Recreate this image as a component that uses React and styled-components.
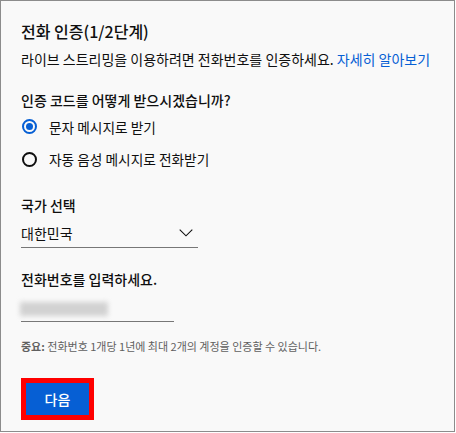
import React from "react";
import styled, { createGlobalStyle } from "styled-components";

const Global = createGlobalStyle`
  html, body { margin: 0; padding: 0; background: #ffffff; }
  * { box-sizing: border-box; }
`;

const Frame = styled.div`
  width: 455px;
  height: 432px;
  border: 1px solid #8c8c8c;
  border-right-width: 1.5px;
  border-bottom-width: 1.5px;
  background: #f9f9f9;
  padding: 20px 20px 0 20px;
  display: flex;
  flex-direction: column;
  align-items: flex-start;
  font-family: "Noto Sans CJK KR", "Noto Sans", sans-serif;
  color: #0f0f0f;
`;

const Title = styled.h1`
  margin: 0;
  font-size: 16px;
  line-height: 20px;
  font-weight: 500;
`;

const Text = styled.p`
  margin: ${(p) => p.$mt || 0}px 0 0 0;
  font-size: 14px;
  line-height: 20px;
  font-weight: ${(p) => (p.$strong ? 500 : 400)};
  white-space: nowrap;
`;

const Link = styled.a`
  color: #065fd4;
  text-decoration: none;
`;

const RadioGroup = styled.div`
  display: flex;
  flex-direction: column;
  margin-top: 0.5px;
`;

const RadioRow = styled.label`
  display: flex;
  align-items: center;
  height: 32.5px;
  gap: 12px;
  font-size: 13.7px;
  cursor: pointer;
`;

const RadioCircle = styled.span`
  width: 15px;
  height: 15px;
  margin-left: 1px;
  border-radius: 50%;
  border: 2px solid ${(p) => (p.$checked ? "#065fd4" : "#0f0f0f")};
  display: flex;
  align-items: center;
  justify-content: center;
  &::after {
    content: "";
    width: 7px;
    height: 7px;
    border-radius: 50%;
    background: ${(p) => (p.$checked ? "#065fd4" : "transparent")};
  }
`;

const Select = styled.div`
  margin-top: 8px;
  width: 177px;
  display: flex;
  align-items: center;
  justify-content: space-between;
  padding: 0 5px 4px 0;
  border-bottom: 1px solid #777777;
  font-size: 14px;
  line-height: 20px;
`;

const Input = styled.div`
  margin-top: 8px;
  width: 153px;
  height: 25px;
  border-bottom: 1px solid #777777;
  display: flex;
  align-items: center;
  padding-bottom: 1px;
`;

const Blurred = styled.span`
  display: block;
  width: 88px;
  height: 14px;
  margin-left: -1px;
  background: #d2d2d2;
  filter: blur(2.5px);
`;

const Note = styled.p`
  margin: 16px 0 0 0;
  font-size: 11px;
  line-height: 16px;
  color: #606060;
  white-space: nowrap;
  b { font-weight: 700; }
`;

const Highlight = styled.div`
  margin-top: 23.5px;
  border: 5px solid #ff0000;
`;

const Button = styled.button`
  display: block;
  width: 63px;
  height: 32px;
  border: none;
  margin: 0;
  background: #065fd4;
  color: #ffffff;
  font-family: "Noto Sans CJK KR", "Noto Sans", sans-serif;
  font-size: 14px;
  font-weight: 500;
  padding: 0;
  cursor: pointer;
`;

const Chevron = () => (
  <svg width="14" height="8" viewBox="0 0 14 8" fill="none">
    <path d="M0.7 0.7 L7 6.8 L13.3 0.7" stroke="#0f0f0f" strokeWidth="1.1" />
  </svg>
);

export default function App() {
  return (
    <>
      <Global />
      <Frame>
        <Title>전화 인증(1/2단계)</Title>
        <Text $mt={8}>
          라이브 스트리밍을 이용하려면 전화번호를 인증하세요. <Link href="#">자세히 알아보기</Link>
        </Text>
        <Text $mt={21} $strong>인증 코드를 어떻게 받으시겠습니까?</Text>
        <RadioGroup>
          <RadioRow>
            <RadioCircle $checked />
            문자 메시지로 받기
          </RadioRow>
          <RadioRow>
            <RadioCircle />
            자동 음성 메시지로 전화받기
          </RadioRow>
        </RadioGroup>
        <Text $mt={19.5} $strong>국가 선택</Text>
        <Select>
          <span>대한민국</span>
          <Chevron />
        </Select>
        <Text $mt={21} $strong>전화번호를 입력하세요.</Text>
        <Input>
          <Blurred />
        </Input>
        <Note>
          <b>중요:</b> 전화번호 1개당 1년에 최대 2개의 계정을 인증할 수 있습니다.
        </Note>
        <Highlight>
          <Button>다음</Button>
        </Highlight>
      </Frame>
    </>
  );
}
